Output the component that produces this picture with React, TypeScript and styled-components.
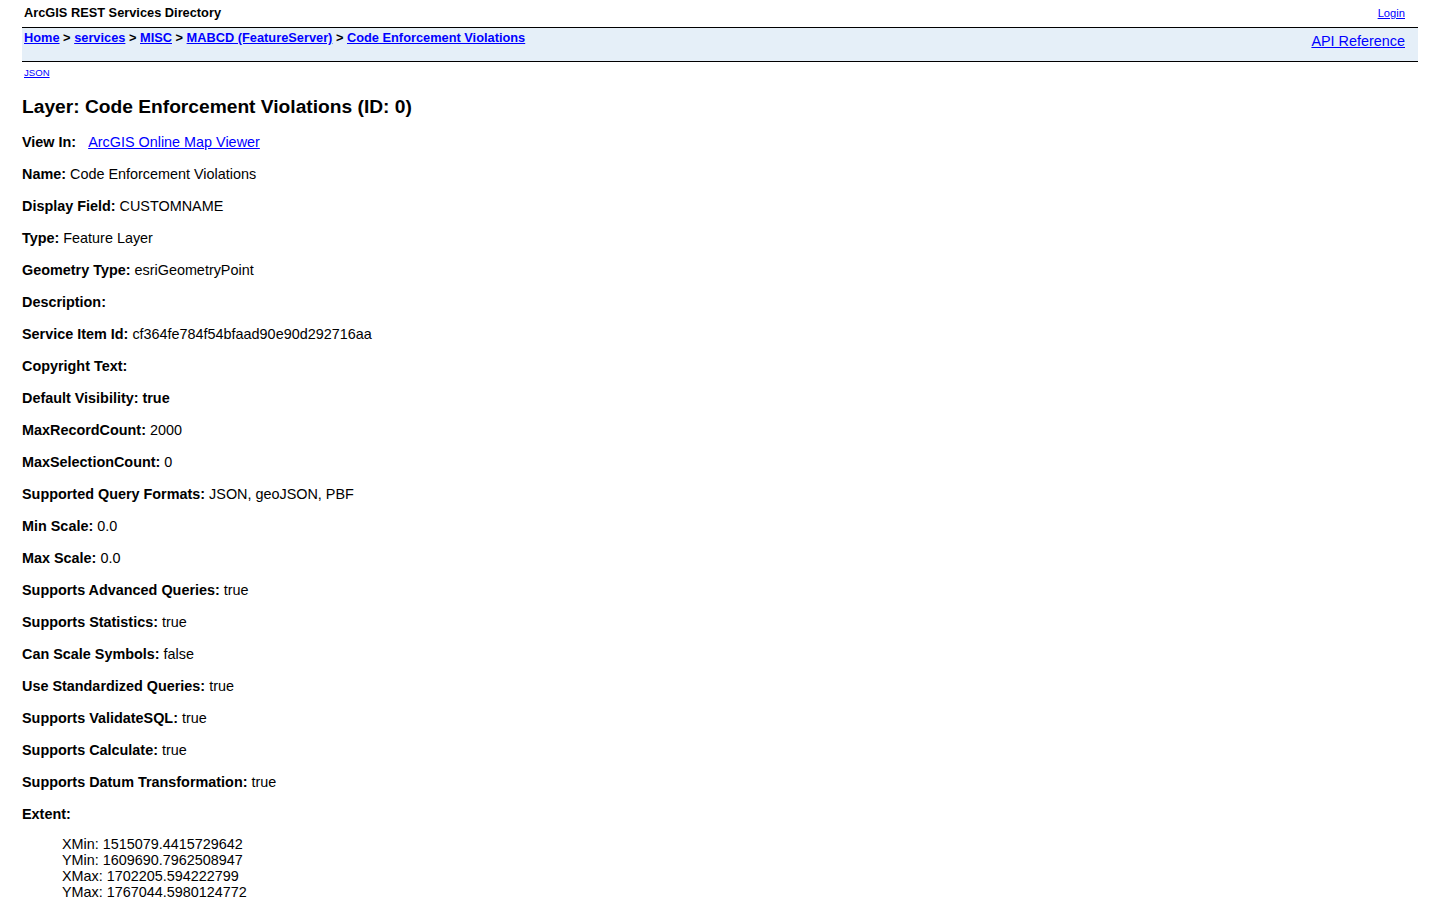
import React from "react";
import styled, { createGlobalStyle } from "styled-components";

const GlobalStyle = createGlobalStyle`
    html, body {
        margin: 0;
        padding: 0;
        background: #fff;
        color: #000;
        font-family: "Liberation Sans", Arial, Helvetica, sans-serif;
    }
    a {
        color: #0000ff;
    }
`;

const Page = styled.div`
    padding: 0 22px 20px;
`;

const UserBar = styled.div`
    display: flex;
    justify-content: space-between;
    align-items: center;
    height: 27px;
    padding: 0 13px 0 2px;
    border-bottom: 1px solid #000;
`;

const Title = styled.div`
    font-size: 12.8px;
    font-weight: bold;
    line-height: 16px;
    margin-top: -2px;
`;

const Login = styled.a`
    font-size: 11.2px;
    line-height: 14px;
    margin-top: -2px;
`;

const NavBar = styled.div`
    display: flex;
    justify-content: space-between;
    align-items: flex-start;
    height: 31px;
    padding: 2px 13px 0 2px;
    background: #e5eff8;
    border-bottom: 1px solid #000;
`;

const Crumbs = styled.div`
    font-size: 12.8px;
    font-weight: bold;
    line-height: 16px;
    a {
        font-weight: bold;
    }
`;

const ApiLink = styled.a`
    font-size: 14.4px;
    line-height: 18px;
    margin-top: 2px;
`;

const Formats = styled.div`
    margin-top: 5px;
    padding-left: 2px;
    font-size: 9.6px;
    line-height: 11px;
`;

const Heading = styled.h2`
    margin: 18px 0 16px;
    font-size: 19.2px;
    line-height: 22px;
    font-weight: bold;
`;

const Row = styled.div<{ $last?: boolean }>`
    font-size: 14.4px;
    line-height: 16px;
    margin-bottom: ${(p) => (p.$last ? 0 : 16)}px;
    b {
        font-weight: bold;
    }
`;

const ViewLink = styled.a`
    margin-left: 12px;
`;

const ExtentList = styled.div`
    margin: 14px 0 0 40px;
    font-size: 14.4px;
    line-height: 16px;
`;

const props: [string, string][] = [
    ["Name:", "Code Enforcement Violations"],
    ["Display Field:", "CUSTOMNAME"],
    ["Type:", "Feature Layer"],
    ["Geometry Type:", "esriGeometryPoint"],
    ["Description:", ""],
    ["Service Item Id:", "cf364fe784f54bfaad90e90d292716aa"],
    ["Copyright Text:", ""],
    ["Default Visibility: true", ""],
    ["MaxRecordCount:", "2000"],
    ["MaxSelectionCount:", "0"],
    ["Supported Query Formats:", "JSON, geoJSON, PBF"],
    ["Min Scale:", "0.0"],
    ["Max Scale:", "0.0"],
    ["Supports Advanced Queries:", "true"],
    ["Supports Statistics:", "true"],
    ["Can Scale Symbols:", "false"],
    ["Use Standardized Queries:", "true"],
    ["Supports ValidateSQL:", "true"],
    ["Supports Calculate:", "true"],
    ["Supports Datum Transformation:", "true"],
];

const extent = [
    "XMin: 1515079.4415729642",
    "YMin: 1609690.7962508947",
    "XMax: 1702205.594222799",
    "YMax: 1767044.5980124772",
];

const App = () => {
    return (
        <Page>
            <GlobalStyle />
            <UserBar>
                <Title>ArcGIS REST Services Directory</Title>
                <Login href="#">Login</Login>
            </UserBar>
            <NavBar>
                <Crumbs>
                    <a href="#">Home</a> &gt; <a href="#">services</a> &gt; <a href="#">MISC</a> &gt;{" "}
                    <a href="#">MABCD (FeatureServer)</a> &gt; <a href="#">Code Enforcement Violations</a>
                </Crumbs>
                <ApiLink href="#">API Reference</ApiLink>
            </NavBar>
            <Formats>
                <a href="#">JSON</a>
            </Formats>
            <Heading>Layer: Code Enforcement Violations (ID: 0)</Heading>
            <Row>
                <b>View In:</b>
                <ViewLink href="#">ArcGIS Online Map Viewer</ViewLink>
            </Row>
            {props.map(([label, value]) => (
                <Row key={label}>
                    <b>{label}</b>
                    {value && " " + value}
                </Row>
            ))}
            <Row $last>
                <b>Extent:</b>
            </Row>
            <ExtentList>
                {extent.map((line) => (
                    <div key={line}>{line}</div>
                ))}
            </ExtentList>
        </Page>
    );
};

export default App;
